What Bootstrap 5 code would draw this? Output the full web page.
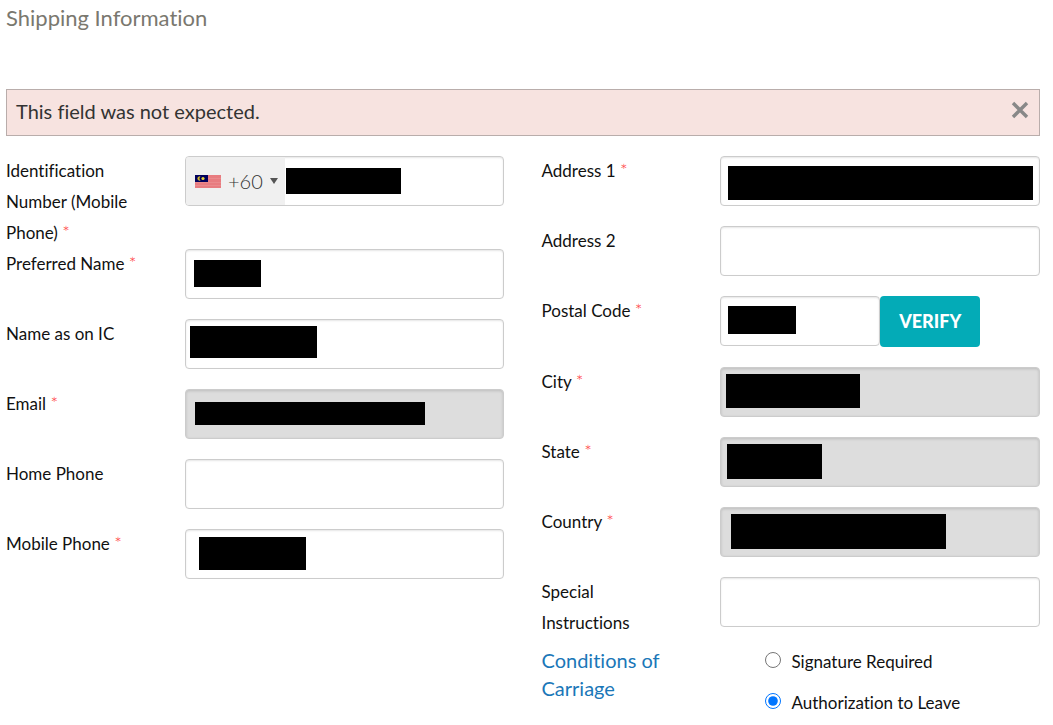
<!DOCTYPE html>
<html lang="en">
<head>
<meta charset="utf-8">
<meta name="viewport" content="width=device-width, initial-scale=1">
<title>Shipping Information</title>
<link rel="stylesheet" href="https://cdn.jsdelivr.net/npm/bootstrap@5.3.0/dist/css/bootstrap.min.css">
<style>
  body { font-family: Lato, "Liberation Sans", sans-serif; font-weight: 400; font-variant-ligatures: none; color: #111; font-size: 17px; line-height: 30px; }
  .page { padding: 4px 13px 0 6px; }
  .page-title { font-size: 22px; line-height: 28px; font-weight: 400; color: #7a786f; margin-bottom: 57px; }
  .notice { background: #f7e3e0; border: 1px solid #b9adab; border-radius: 0; color: #333; font-size: 20px; line-height: 28px; padding: 7px 10px 10px 9px; margin-bottom: 20px; }
  .notice-close { width: 18px; height: 18px; margin-top: 4px; }
  .form-cols { --bs-gutter-x: 37px; }
  .label-cell { width: 35.9%; line-height: 31px; margin-top: -1px; padding-bottom: 1px; }
  .field-cell { width: 64.1%; margin-bottom: 20px; }
  .field { height: 50px; border: 1px solid #ccc; border-radius: 4px; box-shadow: inset 0 1px 2px rgba(0,0,0,.1); font-size: 20px; }
  .field[readonly] { background: #ddd; box-shadow: inset 0 1px 3px rgba(0,0,0,.15); }
  .req { color: #f33; font-size: 18px; font-weight: 300; line-height: 1; }
  .dial { width: 99px; height: 48px; margin: 1px; padding: 0 0 0 9px; gap: 7px; background: #f0f0f0; color: #333; font-size: 20px; font-weight: 300; line-height: 30px; border-radius: 3px 0 0 3px; }
  .dial-caret { border: 4px solid transparent; border-top: 6px solid #555; border-bottom: 0; }
  .postal { width: 50%; }
  .verify { width: 100px; height: 51px; background: #03abb7; color: #fff; font-size: 18px; font-weight: 900; border-radius: 4px; }
  .verify:hover { background: #0298a3; color: #fff; }
  .mask { background: #000; }
  .mask-id { left: 101px; top: 12px; width: 115px; height: 26px; }
  .mask-preferred { left: 9px; top: 11px; width: 67px; height: 27px; }
  .mask-ic { left: 5px; top: 7px; width: 127px; height: 32px; }
  .mask-email { left: 10px; top: 13px; width: 230px; height: 23px; }
  .mask-mobile { left: 14px; top: 8px; width: 107px; height: 33px; }
  .mask-address { left: 8px; top: 10px; width: 305px; height: 34px; }
  .mask-postal { left: 8px; top: 10px; width: 68px; height: 28px; }
  .mask-city { left: 6px; top: 7px; width: 134px; height: 34px; }
  .mask-state { left: 7px; top: 7px; width: 95px; height: 35px; }
  .mask-country { left: 11px; top: 7px; width: 215px; height: 35px; }
  .terms { color: #1a77b8; font-size: 20px; line-height: 28px; }
  .choices { padding-left: 45px; gap: 11px; }
  .choice { gap: 10px; }
  .choice input { width: 16px; height: 16px; margin: 5px 0 0; accent-color: #0075ff; }
</style>
<script src="https://cdn.jsdelivr.net/npm/bootstrap@5.3.0/dist/js/bootstrap.bundle.min.js"></script>
</head>
<body>
<main class="page">
  <h1 class="page-title">Shipping Information</h1>
  <div class="notice alert d-flex justify-content-between align-items-start" role="alert">
    <span>This field was not expected.</span>
    <button type="button" class="notice-close btn p-0 border-0 d-flex" data-bs-dismiss="alert" aria-label="Close">
      <svg width="18" height="18" viewBox="0 0 18 18" fill="none" stroke="#888" stroke-width="3.4"><path d="M2 2 16 16M16 2 2 16"/></svg>
    </button>
  </div>
  <form class="form-cols row">
    <div class="col-6">
      <div class="d-flex align-items-start">
        <label class="label-cell pe-4" for="idnum">Identification Number (Mobile Phone) <span class="req">*</span></label>
        <div class="field-cell position-relative">
          <input class="field form-control" id="idnum" type="tel">
          <button type="button" class="dial btn border-0 d-flex align-items-center position-absolute top-0 start-0" aria-label="Country code">
            <svg width="26" height="14" viewBox="0 -1 26 14"><path fill="#e87c80" d="M0 0h26v13H0z"/><path d="M0 3.5h26M0 7.5h26M0 10.5h26" stroke="#ea8a8d"/><path fill="#00005c" d="M0 0h13v7H0z"/><path d="M5.5 1.5A2.2 2.2 0 1 0 5.5 5.5 2.8 2.8 0 0 1 5.5 1.5" fill="#cdb52c"/><circle cx="8" cy="3.5" r="1.6" fill="#e8d23c"/></svg>
            <span>+60</span><span class="dial-caret"></span>
          </button>
          <span class="mask mask-id position-absolute"></span>
        </div>
      </div>
      <div class="d-flex align-items-start">
        <label class="label-cell" for="preferred">Preferred Name <span class="req">*</span></label>
        <div class="field-cell position-relative"><input class="field form-control" id="preferred" type="text"><span class="mask mask-preferred position-absolute"></span></div>
      </div>
      <div class="d-flex align-items-start">
        <label class="label-cell" for="icname">Name as on IC</label>
        <div class="field-cell position-relative"><input class="field form-control" id="icname" type="text"><span class="mask mask-ic position-absolute"></span></div>
      </div>
      <div class="d-flex align-items-start">
        <label class="label-cell" for="email">Email <span class="req">*</span></label>
        <div class="field-cell position-relative"><input class="field form-control" id="email" type="email" readonly><span class="mask mask-email position-absolute"></span></div>
      </div>
      <div class="d-flex align-items-start">
        <label class="label-cell" for="home">Home Phone</label>
        <div class="field-cell"><input class="field form-control" id="home" type="tel"></div>
      </div>
      <div class="d-flex align-items-start">
        <label class="label-cell" for="mobile">Mobile Phone <span class="req">*</span></label>
        <div class="field-cell position-relative"><input class="field form-control" id="mobile" type="tel"><span class="mask mask-mobile position-absolute"></span></div>
      </div>
    </div>
    <div class="col-6">
      <div class="d-flex align-items-start">
        <label class="label-cell" for="addr1">Address 1 <span class="req">*</span></label>
        <div class="field-cell position-relative"><input class="field form-control" id="addr1" type="text"><span class="mask mask-address position-absolute"></span></div>
      </div>
      <div class="d-flex align-items-start">
        <label class="label-cell" for="addr2">Address 2</label>
        <div class="field-cell"><input class="field form-control" id="addr2" type="text"></div>
      </div>
      <div class="d-flex align-items-start">
        <label class="label-cell" for="postal">Postal Code <span class="req">*</span></label>
        <div class="field-cell position-relative d-flex align-items-start">
          <input class="field postal form-control" id="postal" type="text"><span class="mask mask-postal position-absolute"></span>
          <button type="button" class="verify btn border-0 p-0">VERIFY</button>
        </div>
      </div>
      <div class="d-flex align-items-start">
        <label class="label-cell" for="city">City <span class="req">*</span></label>
        <div class="field-cell position-relative"><input class="field form-control" id="city" type="text" readonly><span class="mask mask-city position-absolute"></span></div>
      </div>
      <div class="d-flex align-items-start">
        <label class="label-cell" for="state">State <span class="req">*</span></label>
        <div class="field-cell position-relative"><input class="field form-control" id="state" type="text" readonly><span class="mask mask-state position-absolute"></span></div>
      </div>
      <div class="d-flex align-items-start">
        <label class="label-cell" for="country">Country <span class="req">*</span></label>
        <div class="field-cell position-relative"><input class="field form-control" id="country" type="text" readonly><span class="mask mask-country position-absolute"></span></div>
      </div>
      <div class="d-flex align-items-start">
        <label class="label-cell pe-5" for="special">Special Instructions</label>
        <div class="field-cell"><input class="field form-control" id="special" type="text"></div>
      </div>
      <div class="d-flex align-items-start">
        <div class="label-cell pe-5"><a class="terms text-decoration-none d-block" href="#">Conditions of Carriage</a></div>
        <div class="choices field-cell mb-0 d-flex flex-column">
          <div class="choice d-flex"><input type="radio" name="delivery" id="sign"><label for="sign">Signature Required</label></div>
          <div class="choice d-flex"><input type="radio" name="delivery" id="leave" checked><label for="leave">Authorization to Leave</label></div>
        </div>
      </div>
    </div>
  </form>
</main>
</body>
</html>
